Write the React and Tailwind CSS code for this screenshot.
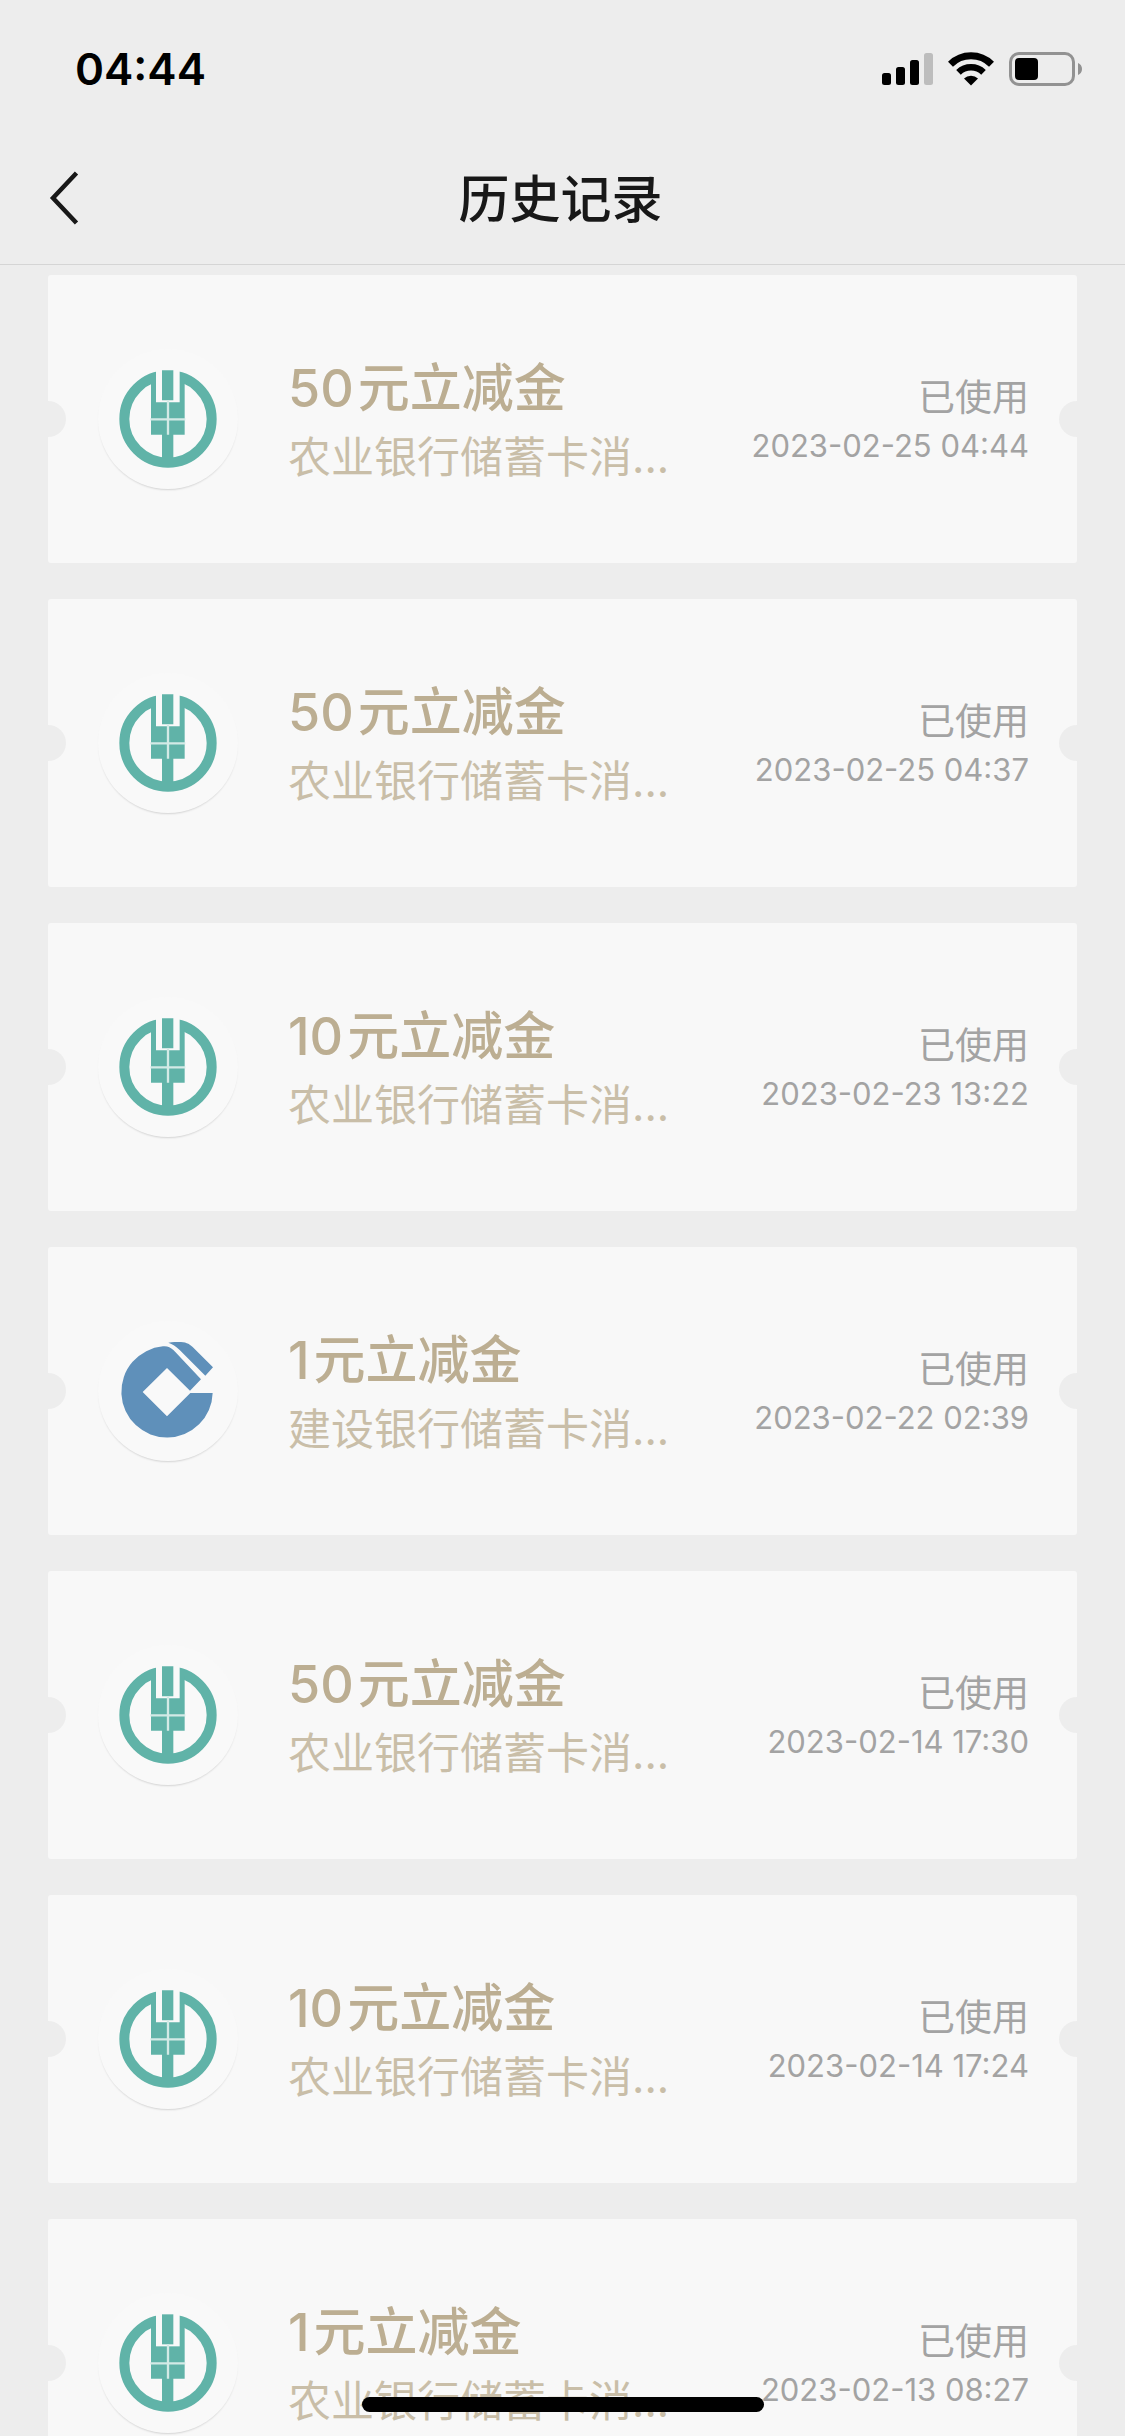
const records = [
  { id: 1, bank: "abc", amount: "50", name: "农业银行储蓄卡消...", time: "2023-02-25 04:44" },
  { id: 2, bank: "abc", amount: "50", name: "农业银行储蓄卡消...", time: "2023-02-25 04:37" },
  { id: 3, bank: "abc", amount: "10", name: "农业银行储蓄卡消...", time: "2023-02-23 13:22" },
  { id: 4, bank: "ccb", amount: "1", name: "建设银行储蓄卡消...", time: "2023-02-22 02:39" },
  { id: 5, bank: "abc", amount: "50", name: "农业银行储蓄卡消...", time: "2023-02-14 17:30" },
  { id: 6, bank: "abc", amount: "10", name: "农业银行储蓄卡消...", time: "2023-02-14 17:24" },
  { id: 7, bank: "abc", amount: "1", name: "农业银行储蓄卡消...", time: "2023-02-13 08:27" },
];

function AbcLogo() {
  return (
    <svg viewBox="0 0 294 294" className="h-[98px] w-[98px]" fill="#60b3a8" aria-hidden="true">
      <circle cx="147" cy="147" r="131" fill="none" stroke="#60b3a8" strokeWidth="30" />
      <path d="M96 28h101v166H96z" />
      <path d="M111 0h71v97h-71z" fill="#f9f9f9" />
      <path d="M129 1h34v90h-34z" />
      <path d="M129 190h34v80h-34z" />
      <path d="M147 91v103M94 148h105" stroke="#d3eae6" strokeWidth="7" />
    </svg>
  );
}

function CcbLogo() {
  return (
    <svg viewBox="-6 0 294 294" className="h-[98px] w-[98px]" fill="#5f90ba" aria-hidden="true">
      <path d="M275 153A137 137 0 1 1 126 13C140 12 147 15 158 25L240 112L207 146L138 78L65 150L138 223L208 153Z" />
      <path d="M142 2C155 0 165 0 180 0C198 1 208 8 218 18L276 76L253 101L176 24C164 13 155 6 142 2Z" />
    </svg>
  );
}

function StatusBar() {
  return (
    <div className="flex h-[132px] items-start justify-between pt-[52px] pr-[43px] pl-[75px]">
      <span className="text-[44px] leading-[34px] font-semibold text-black">04:44</span>
      <div className="flex items-center gap-[15px]">
        <svg viewBox="0 0 51 34" className="h-[34px] w-[51px]" aria-hidden="true">
          <rect x="0" y="21" width="9" height="12" rx="2.5" />
          <rect x="14" y="15" width="9" height="18" rx="2.5" />
          <rect x="28" y="8" width="9" height="25" rx="2.5" />
          <rect x="42" y="1" width="9" height="32" rx="2.5" fill="#bdbdbd" />
        </svg>
        <svg viewBox="0 0 46 34" className="h-[34px] w-[46px]" fill="none" stroke="#000" aria-hidden="true">
          <path d="M2.5 12.2A29 29 0 0 1 43.5 12.2" strokeWidth="7" />
          <path d="M10.5 20.3A18 18 0 0 1 35.5 20.3" strokeWidth="6.6" />
          <path d="M16 26.5A10 10 0 0 1 30 26.5L23 33.5Z" fill="#000" stroke="none" />
        </svg>
        <svg viewBox="0 0 73 34" className="h-[34px] w-[73px]" aria-hidden="true">
          <rect x="1.5" y="1.5" width="63" height="31" rx="8.5" fill="none" stroke="#929292" strokeWidth="3" />
          <rect x="6" y="6" width="23" height="22" rx="4" />
          <path d="M69 11c2.5 1 4 3.3 4 6s-1.5 5-4 6z" fill="#929292" />
        </svg>
      </div>
    </div>
  );
}

function NavBar() {
  return (
    <div className="grid h-[132px] grid-cols-[1fr_auto_1fr] items-center pr-[52px] pl-12">
      <button type="button" aria-label="返回" className="flex h-20 w-20 items-center">
        <svg viewBox="0 0 33 54" className="h-[54px] w-[33px]" fill="none" stroke="#181818" strokeWidth="4.5" aria-hidden="true">
          <path d="M28.5 2L5 27L28.5 52" />
        </svg>
      </button>
      <h1 className="pt-1 text-[51px] leading-[72px] font-medium text-[#181818]">历史记录</h1>
    </div>
  );
}

function RecordCard({ record }) {
  return (
    <li className="relative flex h-72 items-center overflow-hidden rounded-[3px] bg-[#f8f8f8] pr-12 pl-[50px]">
      <span className="absolute top-1/2 -left-[18px] h-9 w-9 -translate-y-1/2 rounded-full bg-[#ededed]" />
      <span className="absolute top-1/2 -right-[18px] h-9 w-9 -translate-y-1/2 rounded-full bg-[#ededed]" />

      <div className="flex h-[140px] w-[140px] shrink-0 items-center justify-center rounded-full bg-[#f9f9f9] shadow-[0_2px_2px_-1px_rgba(0,0,0,0.15)]">
        {record.bank === "ccb" ? <CcbLogo /> : <AbcLogo />}
      </div>

      <div className="ml-[50px] min-w-0 flex-1 pt-1">
        <h2 className="flex items-baseline gap-1 text-[52px] leading-[72px] font-medium text-[#bcae92]">
          <span>{record.amount}</span>
          <span>元立减金</span>
        </h2>
        <p className="truncate text-[43px] leading-[64px] text-[#c9bea8]">{record.name}</p>
      </div>

      <div className="shrink-0 pt-1 text-right text-[#a3a3a3]">
        <p className="text-[37px] leading-[50px]">已使用</p>
        <time className="block text-[31px] leading-[46px]">{record.time}</time>
      </div>
    </li>
  );
}

function App() {
  return (
    <div className="relative flex h-screen flex-col overflow-hidden bg-[#ededed] font-['Inter','Noto_Sans_CJK_SC',sans-serif]">
      <header className="shrink-0 border-b border-[#d5d5d5]">
        <StatusBar />
        <NavBar />
      </header>

      <main className="min-h-0 flex-1 overflow-hidden px-12 pt-[10px]">
        <ul className="flex flex-col gap-9">
          {records.map((record) => (
            <RecordCard key={record.id} record={record} />
          ))}
        </ul>
      </main>

      <div className="absolute bottom-6 left-1/2 h-[15px] w-[402px] -translate-x-1/2 rounded-full bg-black" />
    </div>
  );
}

export default App;
